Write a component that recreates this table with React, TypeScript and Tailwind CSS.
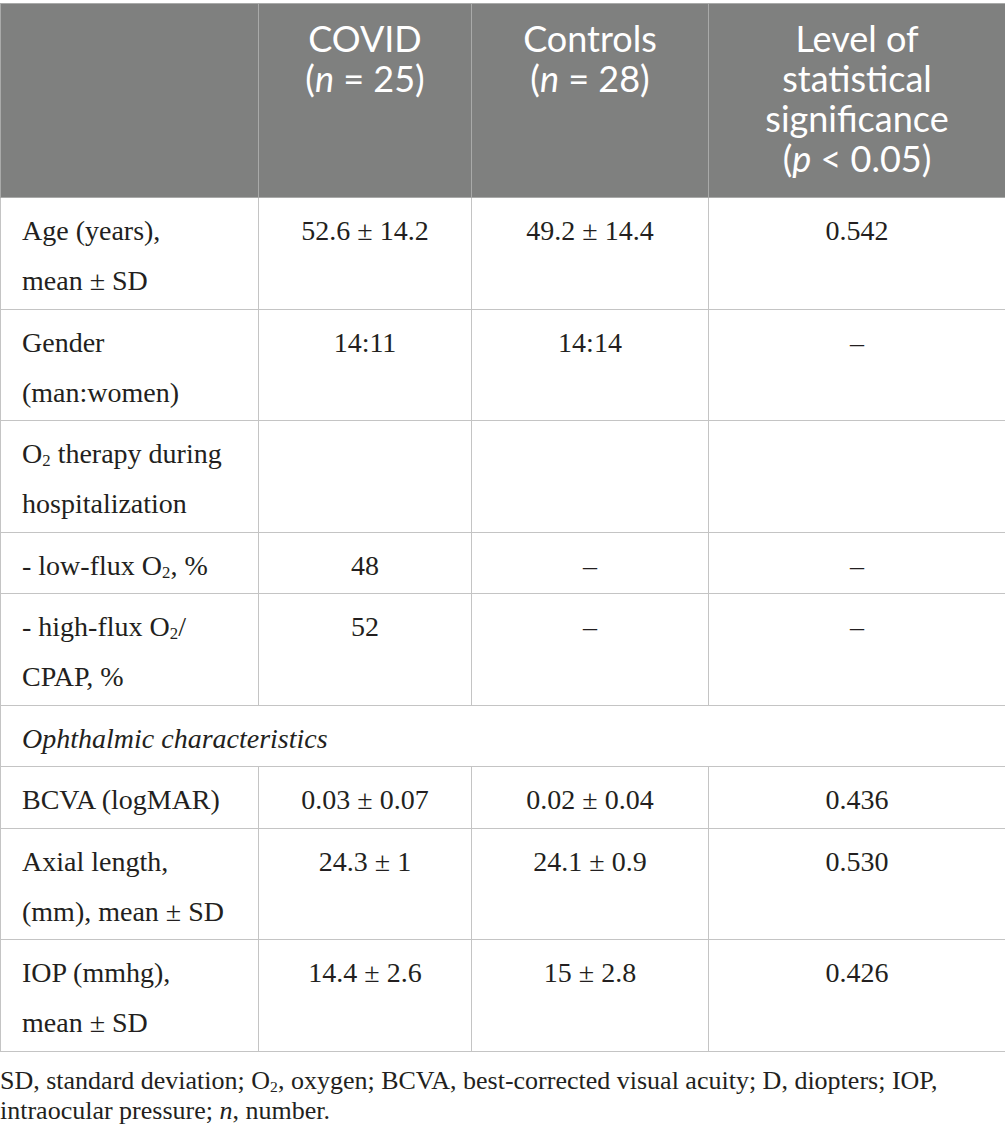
import React from 'react';

const serif = { fontFamily: '"Liberation Serif", "Times New Roman", serif' };
const sans = { fontFamily: 'Lato, "Open Sans", sans-serif' };

type Row = {
  label: React.ReactNode;
  covid?: string;
  controls?: string;
  p?: string;
};

const Sub2 = () => (
  <sub className="text-[60%] leading-none align-baseline relative top-[0.2em]">2</sub>
);

const O2 = () => (
  <>
    O<Sub2 />
  </>
);

const rows: Row[] = [
  { label: <>Age (years),<br />mean ± SD</>, covid: '52.6 ± 14.2', controls: '49.2 ± 14.4', p: '0.542' },
  { label: <>Gender<br />(man:women)</>, covid: '14:11', controls: '14:14', p: '–' },
  { label: <><O2 /> therapy during<br />hospitalization</>, covid: '', controls: '', p: '' },
  { label: <>- low-flux <O2 />, %</>, covid: '48', controls: '–', p: '–' },
  { label: <>- high-flux <O2 />/<br />CPAP, %</>, covid: '52', controls: '–', p: '–' },
];

const ophthalmic: Row[] = [
  { label: 'BCVA (logMAR)', covid: '0.03 ± 0.07', controls: '0.02 ± 0.04', p: '0.436' },
  { label: <>Axial length,<br />(mm), mean ± SD</>, covid: '24.3 ± 1', controls: '24.1 ± 0.9', p: '0.530' },
  { label: <>IOP (mmhg),<br />mean ± SD</>, covid: '14.4 ± 2.6', controls: '15 ± 2.8', p: '0.426' },
];

const cell = 'border border-[#c4c4c4] align-top pt-2 pb-[2.5px] leading-[50px]';

function BodyRow({ row }: { row: Row }) {
  return (
    <tr>
      <td className={`${cell} pl-[21px] pr-2 text-left`}>{row.label}</td>
      <td className={`${cell} text-center`}>{row.covid}</td>
      <td className={`${cell} text-center`}>{row.controls}</td>
      <td className={`${cell} text-center`}>{row.p}</td>
    </tr>
  );
}

export default function App() {
  const head = 'border border-[#a9aaa9] align-top text-center pt-[14px] pb-2 leading-[40px] font-normal';
  return (
    <div className="w-[1005px] bg-white pt-[3px]">
      <table className="w-[1005px] table-fixed border-collapse text-[28px] text-[#231f20]" style={serif}>
        <colgroup>
          <col className="w-[258px]" />
          <col className="w-[213px]" />
          <col className="w-[237px]" />
          <col className="w-[297px]" />
        </colgroup>
        <thead>
          <tr className="bg-[#7f807f] text-white text-[36px] h-[194px]" style={sans}>
            <th className={head}></th>
            <th className={head}>
              COVID<br />(<i>n</i> = 25)
            </th>
            <th className={head}>
              Controls<br />(<i>n</i> = 28)
            </th>
            <th className={head}>
              Level of<br />statistical<br />significance<br />(<i>p</i> &lt; 0.05)
            </th>
          </tr>
        </thead>
        <tbody>
          {rows.map((r, i) => (
            <BodyRow key={i} row={r} />
          ))}
          <tr>
            <td colSpan={4} className={`${cell} pl-[21px] italic`}>
              Ophthalmic characteristics
            </td>
          </tr>
          {ophthalmic.map((r, i) => (
            <BodyRow key={i} row={r} />
          ))}
        </tbody>
      </table>

      {/* Footnote */}
      <p className="mt-[14px] pr-2 text-[26px] leading-[30px] text-[#231f20]" style={serif}>
        SD, standard deviation; O<Sub2 />, oxygen; BCVA, best-corrected visual acuity; D, diopters; IOP,
        intraocular pressure; <i>n</i>, number.
      </p>
    </div>
  );
}
